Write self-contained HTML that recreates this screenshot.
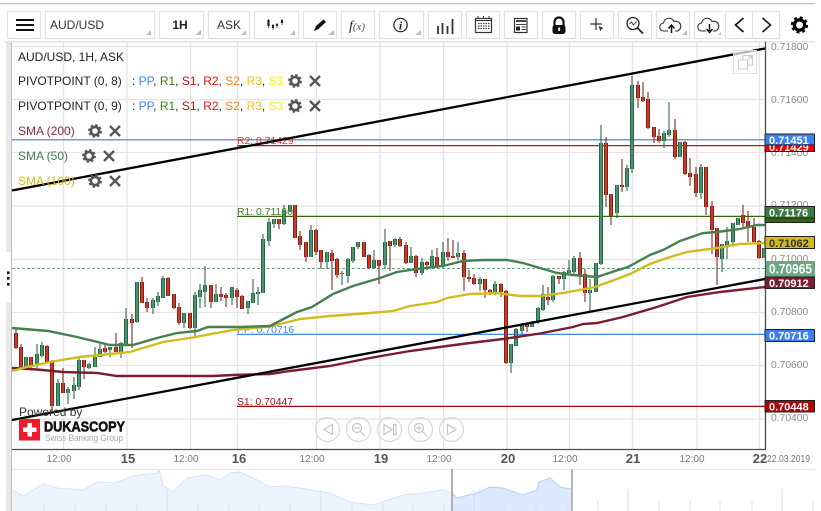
<!DOCTYPE html>
<html><head><meta charset="utf-8"><style>
html,body{margin:0;padding:0;background:#fff;width:821px;height:511px;overflow:hidden}
svg{display:block;font-family:"Liberation Sans",Arial,sans-serif;filter:blur(.35px)}
</style></head><body>
<svg width="821" height="511" viewBox="0 0 821 511" xmlns="http://www.w3.org/2000/svg">
<defs>
<g id="gear"><circle r="4.1" fill="none" stroke-width="2.6"/><circle r="5.7" fill="none" stroke-width="2.4" stroke-dasharray="2.24 2.24"/></g>
<g id="gx"><path d="M-5 -5L5 5M5 -5L-5 5" fill="none" stroke-width="2.3"/></g>
<path id="gb" d="M26 357V367M37 354V365M42 345V356M58 383V406M68 389V393M74 385V391M79 360V387M89 364V368M95 357V367M100 349V357M110 347V350M121 343V352M126 319V344M137 282V322M153 300V308M158 296V302M163 278V298M184 313V323M195 295V328M200 290V297M205 285V292M216 294V302M232 287V298M248 301V308M253 293V303M258 292V294M263 239V293M269 222V241M274 219V224M284 210V224M290 205V212M311 230V257M327 252V262M342 273V274M348 259V276M353 247V261M358 242V247M374 260V268M385 242V265M395 239V245M411 256V263M422 262V273M432 256V266M443 252V266M458 253V257M480 279V284M495 284V292M511 344V363M516 329V346M522 325V331M532 323V327M538 308V322M543 294V310M553 276V300M564 272V279M569 270V273M574 258V272M590 290V293M596 263V292M601 143V264M617 185V213M627 168V187M632 85V169M664 133V141M669 130V135M680 142V157M701 167V193M722 244V259M727 241V246M733 223V242M738 218V225M764 248V258"/>
<path id="rb" d="M16 333V348M21 347V367M31 357V367M47 346V362M52 362V406M63 383V393M84 360V367M105 348V352M116 347V352M132 319V323M142 282V303M147 302V308M168 278V296M174 294V308M179 307V323M190 313V328M211 285V302M221 294V297M226 295V298M237 290V297M242 296V309M279 219V224M295 205V238M300 236V245M306 242V257M316 230V252M321 250V262M332 253V261M337 259V275M364 242V257M369 255V268M379 260V266M390 241V246M400 239V246M406 245V263M416 256V273M427 262V265M437 257V266M448 252V257M453 256V258M464 253V277M469 277V279M474 278V284M485 279V290M490 290V293M501 284V292M506 291V363M527 324V327M548 297V300M559 276V279M580 258V275M585 274V293M606 143V195M611 194V216M622 185V187M638 85V98M643 97V101M648 99V128M654 127V137M659 136V141M675 130V157M685 142V174M690 173V177M696 174V193M706 167V207M712 206V230M717 228V257M743 215V223M748 221V228M754 227V242M759 241V258"/>
</defs>

<rect width="821" height="511" fill="#fff"/>
<rect x="0" y="3" width="815" height="1.3" fill="#c4c4c4"/>

<!-- left strip -->
<rect x="6" y="42" width="6" height="469" fill="#e8e8e8"/>
<rect x="11" y="42" width="1" height="469" fill="#bdbdbd"/>
<rect x="6" y="252" width="5" height="50" fill="#fff"/>
<path d="M7 271.5h2.6v2.6h-2.6zM7 277h2.6v2.6h-2.6zM7 283h2.6v2.6h-2.6z" fill="#111"/>

<!-- grid -->
<path d="M12 46.5H765M12 99.5H765M12 152.5H765M12 206H765M12 259.5H765M12 312.5H765M12 365.5H765M12 419H765" stroke="#e4e4e4" stroke-width="1.2" fill="none"/>
<path d="M63.5 42V449M127 42V449M190.5 42V449M237.5 42V449M316.5 42V449M380 42V449M443.5 42V449M507 42V449M569.5 42V449M632.5 42V449M697 42V449M759.5 42V449" stroke="#e4e4e4" stroke-width="1.3" fill="none"/>
<rect x="5" y="41.3" width="810" height="1.2" fill="#dcdcdc"/>

<!-- horizontal lines -->
<path d="M12 139.8H765" stroke="#3f78cc" stroke-width="1.2"/>
<path d="M237 145.6H765" stroke="#e00808" stroke-width="1.2"/>
<path d="M237 216.4H765" stroke="#2f6a08" stroke-width="1.2"/>
<path d="M237 334.3H765" stroke="#2a78e8" stroke-width="1.2"/>
<path d="M237 406.4H765" stroke="#aa0404" stroke-width="1.2"/>
<path d="M12 268.5H765" stroke="#6aa884" stroke-width="1" stroke-dasharray="3 2"/>

<!-- candle wicks -->
<path d="M26 357V368M37 344V368M42 342V357M58 379V406M68 387V404M74 377V399M79 358V390M89 363V369M95 347V367M100 344V357M110 347V357M121 342V358M126 308V345M137 282V323M153 298V314M158 292V306M163 276V298M184 313V328M195 292V336M200 284V308M205 266V307M216 284V302M232 287V305M248 301V314M253 279V303M258 287V305M263 234V293M269 218V246M274 219V228M284 205V225M290 205V212M311 225V257M327 252V269M342 271V285M348 258V283M353 247V263M358 242V249M374 250V269M385 229V269M395 238V247M411 247V263M422 258V275M432 250V268M443 242V268M458 242V260M480 277V291M495 281V295M511 344V373M516 328V346M522 323V334M532 321V327M538 307V324M543 285V311M553 275V302M564 271V290M569 260V273M574 256V275M590 279V311M596 263V292M601 125V265M617 185V218M627 165V191M632 76V173M664 131V148M669 102V137M680 142V157M701 164V199M722 244V272M727 227V259M733 223V246M738 218V225M764 248V258" stroke="#1d5a3a" stroke-width="1" fill="none"/>
<path d="M16 328V349M21 344V368M31 357V368M47 345V363M52 360V411M63 368V393M84 360V379M105 345V353M116 333V352M132 314V348M142 277V303M147 298V312M168 277V296M174 294V309M179 303V325M190 313V329M211 285V308M221 287V301M226 293V307M237 288V308M242 295V309M279 219V229M295 205V238M300 231V250M306 242V262M316 229V255M321 250V269M332 250V290M337 258V278M364 242V257M369 254V269M379 260V284M390 241V271M400 237V247M406 242V264M416 255V277M427 261V270M437 248V268M448 238V261M453 240V258M464 250V291M469 270V282M474 274V285M485 279V298M490 289V295M501 283V297M506 290V364M527 323V332M548 287V305M559 276V284M580 252V285M585 269V302M606 137V207M611 194V225M622 159V192M638 81V108M643 82V102M648 92V129M654 127V143M659 129V143M675 119V159M685 141V175M690 158V186M696 167V197M706 167V215M712 201V254M717 228V285M743 205V227M748 211V242M754 218V243M759 240V259" stroke="#6e1a12" stroke-width="1" fill="none"/>
<!-- candle bodies -->
<use href="#gb" fill="none" stroke="#1d5a3a" stroke-width="4"/>
<use href="#gb" fill="none" stroke="#4a9470" stroke-width="2.4"/>
<use href="#rb" fill="none" stroke="#6e1a12" stroke-width="4"/>
<use href="#rb" fill="none" stroke="#c63c28" stroke-width="2.4"/>

<!-- pivot labels -->
<g font-size="10.4">
<text x="237" y="144" fill="#e8312a">R2: 0.71429</text>
<text x="237" y="215" fill="#3f7d2a">R1: 0.71160</text>
<text x="237" y="333" fill="#3d86ea">PP: 0.70716</text>
<text x="237" y="405" fill="#a81414">S1: 0.70447</text>
</g>

<!-- SMAs -->
<polyline fill="none" stroke="#7c1c30" stroke-width="2.4" points="12,368 37,369.5 63,372 97,373 117,376 213,376 233,375 270,374 290,371 330,366 370,358 410,351 447,346 470,343 503,339 540,333.5 573,327 583,324 597,323 623,317 657,307 687,297 720,292 765,287"/>
<polyline fill="none" stroke="#d1bc1f" stroke-width="2.4" points="12,371 27,367 50,362 80,357 130,352 143,348 163,342 190,338 233,330 270,326.5 300,319 330,316 370,313 393,311 410,306 437,302 447,298 470,294 497,293 520,296 540,296 563,293 595,287 617,279 630,274 650,264 667,258 687,252 717,248 740,244 765,243"/>
<polyline fill="none" stroke="#47804f" stroke-width="2.4" points="12,328 48,331 77,337 110,345 133,345 157,338 177,333 197,331 208,327 240,327 270,326 297,312 312,307 333,294 353,286 380,278 397,272 417,269 443,266 463,261 483,260 507,260 523,263 540,268 557,273 573,275 597,277 615,271 628,267 650,255 663,250 680,241 703,233 717,232 740,229 757,225 765,225"/>

<!-- channel lines -->
<path d="M12 190.5L765 48.5" stroke="#000" stroke-width="2.3" fill="none"/>
<path d="M12 420L765 279" stroke="#000" stroke-width="2.3" fill="none"/>

<!-- axis frame -->
<path d="M765.5 42V449.5H12" stroke="#4a4a4a" stroke-width="1.3" fill="none"/>

<!-- legend -->
<g font-size="12" fill="#222">
<text x="18" y="61">AUD/USD, 1H, ASK</text>
<text x="18" y="85">PIVOTPOINT (0, 8)</text>
<text x="18" y="110">PIVOTPOINT (0, 9)</text>
<text x="132" y="85">: <tspan fill="#3d86f0">PP</tspan>, <tspan fill="#3a7d22">R1</tspan>, <tspan fill="#b01818">S1</tspan>, <tspan fill="#f01010">R2</tspan>, <tspan fill="#f5821a">S2</tspan>, <tspan fill="#fdc010">R3</tspan>, <tspan fill="#f8f000">S3</tspan></text>
<text x="132" y="110">: <tspan fill="#3d86f0">PP</tspan>, <tspan fill="#3a7d22">R1</tspan>, <tspan fill="#b01818">S1</tspan>, <tspan fill="#f01010">R2</tspan>, <tspan fill="#f5821a">S2</tspan>, <tspan fill="#fdc010">R3</tspan>, <tspan fill="#f8f000">S3</tspan></text>
<text x="18" y="135" fill="#8e2a44">SMA (200)</text>
<text x="18" y="160" fill="#3f7d4c">SMA (50)</text>
<text x="18" y="185" fill="#d4bd20">SMA (100)</text>
</g>
<g stroke="#555">
<use href="#gear" x="295" y="81"/><use href="#gx" x="315" y="81"/>
<use href="#gear" x="295" y="106"/><use href="#gx" x="315" y="106"/>
<use href="#gear" x="95" y="131"/><use href="#gx" x="115" y="131"/>
<use href="#gear" x="89" y="156"/><use href="#gx" x="109" y="156"/>
<use href="#gear" x="95" y="181"/><use href="#gx" x="115" y="181"/>
</g>

<!-- price labels -->
<g font-size="10.3" fill="#8a8a8a">
<text x="771" y="50">0.71800</text>
<text x="771" y="103">0.71600</text>
<text x="771" y="156">0.71400</text>
<text x="771" y="208">0.71200</text>
<text x="771" y="262">0.71000</text>
<text x="771" y="315">0.70800</text>
<text x="771" y="368">0.70600</text>
<text x="771" y="421">0.70400</text>
</g>

<!-- badges -->
<g font-size="11" font-weight="bold" fill="#fff">
<rect x="765" y="140" width="49.5" height="11.5" fill="#f00000" stroke="#222" stroke-width="1"/>
<text x="769" y="151">0.71429</text>
<rect x="765" y="134" width="49.5" height="11" fill="#3a80ee" stroke="#222" stroke-width="1"/>
<text x="769" y="144">0.71451</text>
<rect x="765" y="212" width="49.5" height="10.5" fill="#2f6a08" stroke="#222" stroke-width="1"/>
<rect x="765" y="206.5" width="49.5" height="11.5" fill="#3f7a46" stroke="#222" stroke-width="1"/>
<text x="769" y="216.5">0.71176</text>
<rect x="765" y="236.5" width="49.5" height="12" fill="#d1bc1f" stroke="#222" stroke-width="1"/>
<text x="769" y="247" fill="#333">0.71062</text>
<rect x="766" y="261" width="49" height="15.5" fill="#6aa884"/>
<text x="769" y="273.5" font-size="14" textLength="43" lengthAdjust="spacingAndGlyphs">0.70965</text>
<rect x="765" y="277" width="49.5" height="11.5" fill="#7c1c30" stroke="#222" stroke-width="1"/>
<text x="769" y="287">0.70912</text>
<rect x="765" y="329.5" width="49.5" height="12" fill="#3a80ee" stroke="#222" stroke-width="1"/>
<text x="769" y="339.5">0.70716</text>
<rect x="765" y="400.5" width="49.5" height="11.5" fill="#aa0404" stroke="#222" stroke-width="1"/>
<text x="769" y="410.5">0.70448</text>
</g>

<!-- popout -->
<rect x="733.5" y="50.5" width="23" height="23" fill="#fff" fill-opacity=".7" stroke="#e0e0e0"/>
<path d="M743 60V55.500H752.500V65H748M738.500 60H747.500V69H738.500ZM747 60.500L751.500 56M748 56H751.500V59.500" fill="none" stroke="#ccc" stroke-width="1.1"/>

<!-- logo -->
<text x="19" y="416" font-size="12" fill="#333">Powered by</text>
<rect x="19" y="419" width="21" height="21.500" fill="#ee1c2e"/>
<path d="M27.500 423h4.500v4.500h4.500v4.500h-4.500v4.500h-4.500v-4.500h-4.500v-4.500h4.500z" fill="#fff"/>
<text x="44" y="431.500" font-size="14.500" font-weight="bold" fill="#111" stroke="#111" stroke-width=".6" textLength="81" lengthAdjust="spacingAndGlyphs">DUKASCOPY</text>
<text x="45" y="441" font-size="9.500" fill="#aaa" textLength="78" lengthAdjust="spacingAndGlyphs">Swiss Banking Group</text>

<!-- zoom nav buttons -->
<g fill="none" stroke="#d8d8d8" stroke-width="1.2">
<circle cx="327.500" cy="429.500" r="12"/><circle cx="358.500" cy="429.500" r="12"/><circle cx="389.500" cy="429.500" r="12"/><circle cx="420.500" cy="429.500" r="12"/><circle cx="451.500" cy="429.500" r="12"/>
</g>
<g fill="none" stroke="#c4c4c4" stroke-width="1.2">
<path d="M332.500 424.500V434.500L324 429.500Z"/>
<circle cx="357" cy="428" r="4.500"/><path d="M354.500 428H359.500M360.500 431.500L365 436"/>
<path d="M384 424.500V434.500L392 429.500ZM393.500 424.500H396V434.500H393.500Z"/>
<circle cx="419" cy="428" r="4.500"/><path d="M416.500 428H421.500M419 425.500V430.500M422.500 431.500L427 436"/>
<path d="M447.500 424.500V434.500L456 429.500Z"/>
</g>

<!-- time axis -->
<g font-size="10" fill="#777" text-anchor="middle">
<text x="59" y="462">12:00</text><text x="186" y="462">12:00</text><text x="312" y="462">12:00</text><text x="439" y="462">12:00</text><text x="565" y="462">12:00</text><text x="692" y="462">12:00</text>
</g>
<g font-size="13" font-weight="bold" fill="#555" text-anchor="middle">
<text x="128" y="463">15</text><text x="239" y="463">16</text><text x="381" y="463">19</text><text x="508" y="463">20</text><text x="633" y="463">21</text><text x="760" y="463">22</text>
</g>
<text x="767" y="462" font-size="10.500" fill="#777" textLength="43" lengthAdjust="spacingAndGlyphs">22.03.2019</text>

<!-- navigator -->
<path d="M12 469.500H815" stroke="#e8e8e8" stroke-width="1.200"/>
<path d="M13 490L23 496L43 484L57 488L83 490L97 482L115 483L133 476L157 473L159 470L163 485L173 492L187 478L207 475L220 480L230 473L240 472L257 480L270 487L283 486L300 488L330 493L350 502L373 505L403 495L423 493L443 490L452 493V511H13Z" fill="#eef4fd" stroke="none"/>
<path d="M13 490L23 496L43 484L57 488L83 490L97 482L115 483L133 476L157 473L159 470L163 485L173 492L187 478L207 475L220 480L230 473L240 472L257 480L270 487L283 486L300 488L330 493L350 502L373 505L403 495L423 493L443 490L452 493" fill="none" stroke="#d4e4fb" stroke-width="1"/>
<path d="M452 493L457 498L477 493L490 487L503 488L523 495L537 490L539 482L550 478L560 487L571 489V511H452Z" fill="#dde9fc"/>
<path d="M452 493L457 498L477 493L490 487L503 488L523 495L537 490L539 482L550 478L560 487L571 489" fill="none" stroke="#b5d0f7" stroke-width="1"/>
<path d="M44 503V511M75 503V511M106 503V511M137 503V511M198 503V511M229 503V511M259 503V511M290 503V511M352 503V511M383 503V511M413 503V511M444 503V511M505 503V511M536 503V511M567 503V511M598 501V511M659 501V511M690 501V511M720 501V511M752 501V511M813 501V511" stroke="#e0e0e0" stroke-width="1"/>
<path d="M167 490V511M321 490V511M474 490V511M628 489V511M782 489V511" stroke="#dcdcdc" stroke-width="1"/>
<rect x="451" y="469" width="2" height="42" fill="#b0b0b0"/>
<rect x="571" y="469" width="2" height="42" fill="#b8b8b8"/>

<!-- toolbar -->
<g fill="#fff" stroke="#e2e2e2" stroke-width="1.200">
<rect x="7.500" y="11.500" width="33" height="27"/>
<rect x="45.500" y="11.500" width="109" height="27"/>
<rect x="159.500" y="11.500" width="44" height="27"/>
<rect x="208.500" y="11.500" width="41" height="27"/>
<rect x="254.500" y="11.500" width="44" height="27"/>
<rect x="303.500" y="11.500" width="33" height="27"/>
<rect x="341.500" y="11.500" width="33" height="27"/>
<rect x="379.500" y="11.500" width="44" height="27"/>
<rect x="428.500" y="11.500" width="33" height="27"/>
<rect x="466.500" y="11.500" width="33" height="27"/>
<rect x="504.500" y="11.500" width="33" height="27"/>
<rect x="542.500" y="11.500" width="33" height="27"/>
<rect x="580.500" y="11.500" width="33" height="27"/>
<rect x="618.500" y="11.500" width="33" height="27"/>
<rect x="656.500" y="11.500" width="33" height="27"/>
<path d="M722 11.500H694.500V38.500H722"/>
<rect x="725.500" y="11.500" width="54" height="27"/>
<path d="M752.500 11.500V38.500"/>
</g>
<!-- corner triangles -->
<path d="M151 30V35H146ZM201 30V35H195ZM246 30V35H241ZM295 30V35H290ZM334 30V35H328ZM421 30V35H415ZM687 30V35H682ZM721 32V35H718Z" fill="#bdbdbd"/>
<!-- hamburger -->
<path d="M16 20H34M16 25H34M16 30H34" stroke="#111" stroke-width="2"/>
<text x="50" y="29" font-size="12" fill="#333">AUD/USD</text>
<text x="180" y="29" font-size="12" fill="#222" text-anchor="middle" font-weight="bold">1H</text>
<text x="217" y="29" font-size="12" fill="#333">ASK</text>
<!-- candle icon -->
<path d="M268.500 19v9M273 24v6M277 23v5M282 19v6" stroke="#666" stroke-width="1"/>
<path d="M268.500 20v6M273 25v3M277 24v2M282 20v3" stroke="#222" stroke-width="2.200"/>
<!-- pencil -->
<path d="M314 31L316 26L323.500 19.500L326 22L318.500 29Z" fill="#111"/>
<!-- f(x) -->
<text x="349" y="30" font-family="'Liberation Serif',serif" font-size="14" font-style="italic" fill="#222">f<tspan font-size="11" fill="#555">(x)</tspan></text>
<!-- info -->
<circle cx="400.500" cy="25" r="6.700" fill="none" stroke="#222" stroke-width="1.200"/>
<text x="400.500" y="29.500" font-family="'Liberation Serif',serif" font-size="12" font-style="italic" font-weight="bold" fill="#222" text-anchor="middle">i</text>
<!-- bars -->
<path d="M438 26V34M442.500 23V34M447.500 26V34M452.500 19V34" stroke="#333" stroke-width="1.800"/>
<!-- calendar -->
<rect x="475.500" y="18.500" width="16" height="14" fill="none" stroke="#333" stroke-width="1.200"/>
<path d="M475 20.500H492M478 16V19M483.500 16V19M489 16V19" stroke="#333" stroke-width="1"/>
<path d="M478 23.500H489.500M478 26H489.500M478 28.500H489.500" stroke="#444" stroke-width="1.300" stroke-dasharray="1.500 1"/>
<!-- news -->
<rect x="514.500" y="18.500" width="12.500" height="14" fill="none" stroke="#333" stroke-width="1.200"/>
<path d="M516 21H526" stroke="#333" stroke-width="1.800"/>
<path d="M516 24.500H526M521.500 27H526M521.500 29.500H526" stroke="#444" stroke-width="1"/>
<rect x="516" y="26.500" width="4" height="4" fill="#222"/>
<!-- lock -->
<path d="M554.500 26V22a4.500 4.500 0 0 1 9 0V26" fill="none" stroke="#111" stroke-width="2.200"/>
<rect x="552.500" y="25" width="13" height="9" rx="2.500" fill="#111"/>
<rect x="558.300" y="27.500" width="1.800" height="3.500" fill="#fff"/>
<!-- cross -->
<path d="M596 18V30M590 24H602" stroke="#333" stroke-width="1.200"/>
<path d="M598.500 26L603.500 28L601.300 29.200L600.500 31.500Z" fill="#333"/>
<!-- zoom -->
<circle cx="633" cy="23.500" r="6" fill="none" stroke="#222" stroke-width="1.300"/>
<path d="M637.500 28L643 33.500" stroke="#222" stroke-width="1.800"/>
<path d="M629.500 24L631.500 22L633.500 25L636.500 21.500" fill="none" stroke="#444" stroke-width="1"/>
<!-- upload -->
<path d="M668 31H664a4 4 0 0 1 -.5 -8a5.500 5.500 0 0 1 10.500 -1.500a4.500 4.500 0 0 1 3.500 9.500H675" fill="none" stroke="#333" stroke-width="1.100"/>
<path d="M671.500 33V26.500M668.500 28.500L671.500 25L674.500 28.500" fill="none" stroke="#111" stroke-width="1.500"/>
<!-- download -->
<path d="M706 31H702a4 4 0 0 1 -.5 -8a5.500 5.500 0 0 1 10.500 -1.500a4.500 4.500 0 0 1 3.500 9.500H713" fill="none" stroke="#333" stroke-width="1.100"/>
<path d="M709.500 24V31M706.500 29L709.500 32.500L712.500 29" fill="none" stroke="#111" stroke-width="1.500"/>
<!-- arrows -->
<path d="M743.500 18L735.500 25L743.500 32" fill="none" stroke="#111" stroke-width="1.700"/>
<path d="M762.500 18L770.500 25L762.500 32" fill="none" stroke="#222" stroke-width="1.700"/>
<!-- gear -->
<g stroke="#000" transform="translate(799.500 25) scale(1.250)"><use href="#gear"/></g>
</svg>
</body></html>
